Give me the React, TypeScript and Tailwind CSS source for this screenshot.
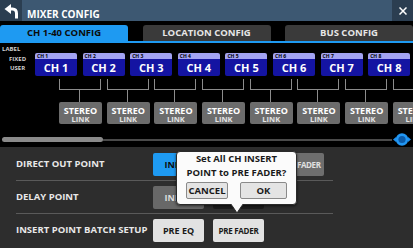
import React from "react";

const channels = [1, 2, 3, 4, 5, 6, 7, 8];
const links = [0, 1, 2, 3, 4, 5, 6, 7];

function BackIcon() {
  return (
    <svg width="14" height="15" viewBox="0 0 14 15" className="ml-[4px] mt-[4px]">
      <polygon points="0.5,5 7,0 7,10" fill="#ffffff" />
      <path d="M6 5 H8.5 Q12.5 5 12.5 9.5 V14.5" stroke="#ffffff" strokeWidth="3" fill="none" />
    </svg>
  );
}

function CloseIcon() {
  return (
    <svg width="8" height="8" viewBox="0 0 8 8">
      <path d="M0.5 0.5 L7.5 7.5 M7.5 0.5 L0.5 7.5" stroke="#ffffff" strokeWidth="1.5" />
    </svg>
  );
}

function Handle() {
  return (
    <svg width="20" height="15" viewBox="0 0 20 15">
      <polygon points="1,7.5 4,5 4,10" fill="#1e90f0" />
      <polygon points="19,7.5 16,5 16,10" fill="#1e90f0" />
      <circle cx="10" cy="7.5" r="6.2" fill="#2196f3" />
      <circle cx="10" cy="7.5" r="3.6" fill="#0b5aa8" />
    </svg>
  );
}

export default function App() {
  return (
    <div className="w-[413px] h-[248px] bg-black overflow-hidden relative font-['Open_Sans',sans-serif] font-bold">
      {/* Header */}
      <div className="h-[21px] flex bg-[#3d5872]">
        <div className="w-[22px] h-full bg-[#2b3e51]">
          <BackIcon />
        </div>
        <div className="pl-[5px] pt-[9px] text-[10px] leading-[10px] text-white">MIXER CONFIG</div>
        <div className="flex-1" />
        <div className="w-[21px] h-full bg-[#2b3e51] flex items-center justify-center">
          <CloseIcon />
        </div>
      </div>

      {/* Tabs */}
      <div className="mt-[4px] h-[16px] flex gap-[14.5px]">
        <div className="w-[128px] rounded-t-[3px] bg-[#1e9af2] text-[#0c0c0c] text-[9.5px] leading-[16px] text-center">
          CH 1-40 CONFIG
        </div>
        <div className="w-[128px] rounded-t-[3px] bg-[#3a3a3a] text-[#e6e6e6] text-[9.5px] leading-[16px] text-center">
          LOCATION CONFIG
        </div>
        <div className="w-[128px] rounded-t-[3px] bg-[#3a3a3a] text-[#e6e6e6] text-[9.5px] leading-[16px] text-center">
          BUS CONFIG
        </div>
      </div>
      <div className="h-[2px] bg-[#1e9af2]" />

      {/* Channel area */}
      <div className="h-[89px] overflow-hidden">
        <div className="flex">
          <div className="w-[35px] shrink-0 pt-[2px] text-[6px] leading-[9.5px] text-[#cfcfcf]">
            <div className="pl-[2px]">LABEL</div>
            <div className="pl-[9px]">FIXED</div>
            <div className="pl-[10px]">USER</div>
          </div>
          <div className="flex gap-[5.6px] pt-[10px]">
            {channels.map((n) => (
              <div key={n} className="w-[42px] shrink-0">
                <div className="h-[6px] rounded-t-[2px] bg-[#a3a3f2] text-[5px] leading-[6px] text-black pl-[2px]">
                  CH {n}
                </div>
                <div className="h-[17px] rounded-b-[2px] bg-[#1414a2] text-white text-[11px] leading-[17px] text-center">
                  CH {n}
                </div>
              </div>
            ))}
          </div>
        </div>

        {/* brackets and stereo link */}
        <div className="flex pl-[59px] gap-[4.7px] mt-[3px]">
          {links.map((i) => (
            <div key={i} className="w-[43px] shrink-0 flex flex-col">
              <div className="w-[42px] h-[11px] border-x border-b border-[#8c8c8c]" />
              <div className="w-px h-[12px] bg-[#8c8c8c] ml-[20px]" />
              <div className="h-[22px] w-[43px] rounded-[2px] bg-[#6c6c6c] flex flex-col items-center text-white">
                <div className="text-[9px] leading-[9px] mt-[4px]">STEREO</div>
                <div className="text-[7.5px] leading-[7px] mt-[1px] text-[#e4e4e4]">LINK</div>
              </div>
            </div>
          ))}
        </div>
      </div>

      {/* Scrollbar */}
      <div className="h-[15px] flex items-center">
        <div className="ml-[2px] w-[101px] h-[5px] rounded-full bg-[#8a8a8a] shrink-0" />
        <div className="flex-1 h-[2px] bg-[#4a4a4a]" />
        <div className="mr-[1px]">
          <Handle />
        </div>
      </div>

      {/* Bottom panel */}
      <div className="h-[101px] bg-[#2d2d2d] pt-[6px] text-[9.5px]">
        <div className="h-[23px] flex items-center">
          <div className="w-[153px] pl-[16px] text-[#e8e8e8]">DIRECT OUT POINT</div>
          <div className="flex gap-[9px]">
            <div className="w-[51px] h-[23px] rounded-[2px] bg-[#1e9af2] text-[#0c0c0c] text-[9px] leading-[23px] text-center">INPUT</div>
            <div className="w-[51px] h-[23px] rounded-[2px] bg-[#6e6e6e] text-[#e0e0e0] text-[8px] tracking-[-0.4px] leading-[23px] text-center">PRE FADER</div>
            <div className="w-[51px] h-[23px] rounded-[2px] bg-[#6e6e6e] text-[#e0e0e0] text-[8px] tracking-[-0.4px] leading-[23px] text-center">POST FADER</div>
          </div>
        </div>
        <div className="ml-[16px] w-[317px] h-px bg-[#5a5a5a] mt-[4px] mb-[5px]" />
        <div className="h-[23px] flex items-center">
          <div className="w-[153px] pl-[16px] text-[#e8e8e8]">DELAY POINT</div>
          <div className="flex gap-[9px]">
            <div className="w-[51px] h-[23px] rounded-[2px] bg-[#686868] text-[#dcdcdc] text-[9px] leading-[23px] text-center">INPUT</div>
            <div className="w-[51px] h-[23px] rounded-[2px] bg-[#1c1c1c] text-[#bdbdbd] text-[8px] tracking-[-0.4px] leading-[23px] text-center">PRE FADER</div>
          </div>
        </div>
        <div className="ml-[16px] w-[317px] h-px bg-[#5a5a5a] mt-[4px] mb-[5px]" />
        <div className="h-[23px] flex items-center">
          <div className="w-[153px] pl-[16px] text-[#e8e8e8]">INSERT POINT BATCH SETUP</div>
          <div className="flex gap-[9px]">
            <div className="w-[51px] h-[23px] rounded-[2px] bg-[#e2e2e2] text-[#1a1a1a] text-[9px] leading-[23px] text-center">PRE EQ</div>
            <div className="w-[51px] h-[23px] rounded-[2px] bg-[#e2e2e2] text-[#1a1a1a] text-[8px] tracking-[-0.3px] leading-[23px] text-center">PRE FADER</div>
          </div>
        </div>
      </div>

      {/* Confirmation popup */}
      <div className="absolute left-[176px] top-[151px] w-[121px] h-[54px] bg-[#fbfbfb] border border-[#2a2a2a] rounded-[4px] shadow-[0_1px_3px_rgba(0,0,0,0.6)] text-[#1a1a1a] text-[9.5px] leading-[14px] text-center">
        <div>Set All CH INSERT</div>
        <div>POINT to PRE FADER?</div>
        <div className="mt-[2px] flex justify-center gap-[12px]">
          <div className="w-[42px] h-[17px] bg-[#e4e4e4] border border-[#8a8a8a] rounded-[2px] leading-[15px]">CANCEL</div>
          <div className="w-[47px] h-[17px] bg-[#e4e4e4] border border-[#8a8a8a] rounded-[2px] leading-[15px]">OK</div>
        </div>
      </div>
      <svg className="absolute left-[230px] top-[204px]" width="14" height="10" viewBox="0 0 14 10">
        <polygon points="1,0 7,9 13,0" fill="#fbfbfb" stroke="#2a2a2a" strokeWidth="1" />
        <rect x="1.8" y="0" width="10.4" height="1.2" fill="#fbfbfb" />
      </svg>
    </div>
  );
}
